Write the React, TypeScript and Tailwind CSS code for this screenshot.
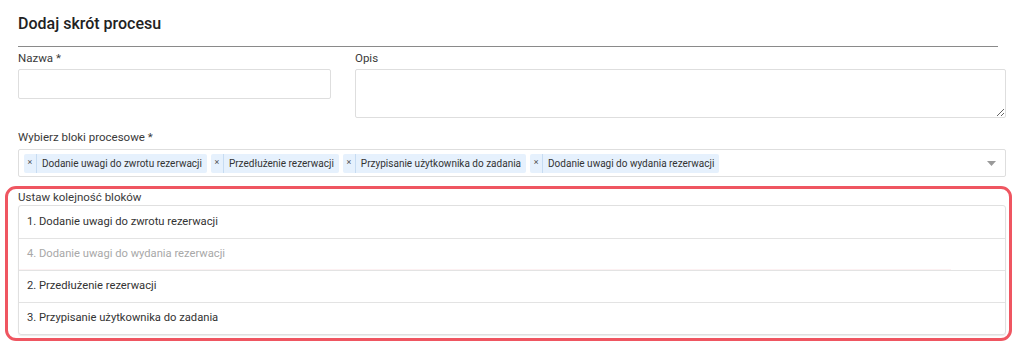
const chips = [
  "Dodanie uwagi do zwrotu rezerwacji",
  "Przedłużenie rezerwacji",
  "Przypisanie użytkownika do zadania",
  "Dodanie uwagi do wydania rezerwacji",
];

const order = [
  { label: "1. Dodanie uwagi do zwrotu rezerwacji" },
  { label: "4. Dodanie uwagi do wydania rezerwacji", dragging: true },
  { label: "2. Przedłużenie rezerwacji" },
  { label: "3. Przypisanie użytkownika do zadania" },
];

export default function App() {
  return (
    <div className="w-[1024px] h-[346px] bg-white text-[#333] font-['Roboto',sans-serif] overflow-hidden">
      {/* Header */}
      <div className="ml-[18px] w-[980px] pt-[14px] h-[47px] border-b border-[#8a8a8a]">
        <h1 className="text-[16px] leading-[20px] font-medium text-[#222]">Dodaj skrót procesu</h1>
      </div>

      {/* Name + description */}
      <div className="ml-[18px] w-[988px] flex gap-[24px] mt-[2px]">
        <div className="w-[313px]">
          <label className="block text-[11.5px] leading-[18px] text-[#3a3a3a]">Nazwa *</label>
          <input className="block w-full h-[30px] mt-[2px] border border-[#dedede] rounded-[2px] outline-none" />
        </div>
        <div className="flex-1">
          <label className="block text-[11.5px] leading-[18px] text-[#3a3a3a]">Opis</label>
          <textarea className="block w-full h-[49px] mt-[2px] border border-[#dedede] rounded-[2px] outline-none resize-y" />
        </div>
      </div>

      {/* Multi select */}
      <div className="ml-[18px] w-[988px] mt-[10px]">
        <label className="block text-[11.5px] leading-[18px] text-[#3a3a3a]">Wybierz bloki procesowe *</label>
        <div className="mt-[3px] h-[28px] border border-[#dedede] rounded-[2px] flex items-center pl-[5px] pr-[8px]">
          <div className="flex gap-[4px] flex-1">
            {chips.map((c) => (
              <span key={c} className="flex items-center h-[19px] bg-[#e6f1fd] rounded-[2px] text-[10px] text-[#333]">
                <span className="w-[13px] h-full flex items-center justify-center text-[9px] text-[#555] border-r border-[#c7dcf2]">×</span>
                <span className="px-[5px]">{c}</span>
              </span>
            ))}
          </div>
          <svg width="9" height="5" viewBox="0 0 9 5" className="mr-[1px]">
            <path d="M0 0h9L4.5 5z" fill="#9a9a9a" />
          </svg>
        </div>
      </div>

      {/* Order section */}
      <div className="ml-[5px] w-[1007px] mt-[9px] border-[3px] border-[#ef5661] rounded-[11px] pl-[10px] pr-[3px] pb-[3px]">
        <label className="block text-[11.5px] leading-[16px] text-[#3a3a3a]">Ustaw kolejność bloków</label>
        <div className="border border-[#e0e0e0] rounded-[3px] shadow-[0_1px_1px_rgba(0,0,0,0.08)]">
          {order.map((r, i) => (
            <div
              key={r.label}
              className={`h-[32px] flex items-center px-[8px] text-[11.2px] ${
                i > 0 ? "border-t border-[#e3e3e3]" : ""
              } ${r.dragging ? "text-[#a8a8a8] relative" : "text-[#333]"}`}
            >
              {r.label}
              {r.dragging && (
                <span className="absolute left-0 right-[54px] bottom-0 h-px bg-[#fdf1f2]" />
              )}
            </div>
          ))}
        </div>
      </div>
    </div>
  );
}
